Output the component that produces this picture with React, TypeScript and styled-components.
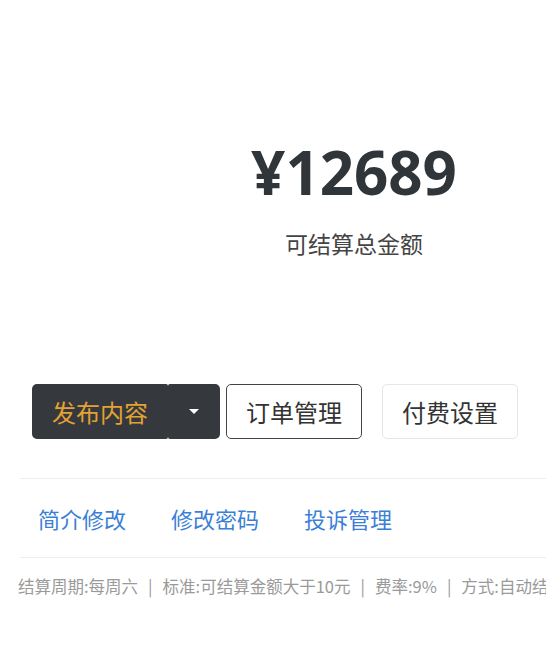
import React from "react";
import styled, { createGlobalStyle } from "styled-components";

const Global = createGlobalStyle`
  html, body {
    margin: 0;
    padding: 0;
    background: #ffffff;
    overflow: hidden;
  }
  body {
    font-family: "Noto Sans CJK SC", "Open Sans", sans-serif;
  }
`;

const Page = styled.div`
  width: 720px;
  display: flex;
  flex-direction: column;
`;

const Summary = styled.section`
  display: flex;
  flex-direction: column;
  align-items: center;
  padding-top: 136px;
  height: 384px;
  box-sizing: border-box;
  width: 708px;
`;

const Amount = styled.div`
  font-family: "Open Sans", "Liberation Sans", sans-serif;
  font-weight: 700;
  font-size: 60px;
  line-height: 72px;
  color: #30353a;
`;

const AmountLabel = styled.div`
  margin-top: 21px;
  font-size: 23px;
  line-height: 28px;
  color: #444;
`;

const Actions = styled.div`
  display: flex;
  align-items: center;
  padding-left: 32px;
  gap: 20px;
  margin-bottom: 39px;
`;

const ButtonGroup = styled.div`
  display: flex;
  gap: 6px;
`;

const SplitButton = styled.div`
  display: flex;
  height: 55px;
`;

const DarkMain = styled.button`
  height: 55px;
  width: 136px;
  box-sizing: border-box;
  border: none;
  border-radius: 5px 2px 2px 5px;
  background: #35393e;
  color: #e3a233;
  font-family: "Noto Sans CJK SC", sans-serif;
  font-size: 24px;
  padding: 0;
  cursor: pointer;
`;

const DarkCaret = styled.button`
  height: 55px;
  width: 52px;
  box-sizing: border-box;
  border: none;
  border-radius: 2px 5px 5px 2px;
  background: #35393e;
  display: flex;
  align-items: center;
  justify-content: center;
  padding: 0;
  cursor: pointer;
`;

const Caret = styled.span`
  width: 0;
  height: 0;
  border-left: 5px solid transparent;
  border-right: 5px solid transparent;
  border-top: 5px solid #ffffff;
`;

const OutlineButton = styled.button<{ $strong?: boolean; $offset?: number }>`
  height: 55px;
  width: 136px;
  box-sizing: border-box;
  background: #ffffff;
  border: 1px solid ${(p) => (p.$strong ? "#444444" : "#e6e6e6")};
  border-radius: 5px;
  color: #333;
  font-family: "Noto Sans CJK SC", sans-serif;
  font-size: 24px;
  padding: 0;
  cursor: pointer;
  flex-shrink: 0;
  margin-left: ${(p) => p.$offset ?? 0}px;
`;

const Divider = styled.hr`
  margin: 0 0 0 20px;
  border: none;
  border-top: 1px solid #eeeeee;
`;

const Tabs = styled.nav`
  display: flex;
  align-items: center;
  height: 78px;
  padding-left: 38px;
  gap: 45px;
`;

const TabLink = styled.a`
  font-size: 22px;
  line-height: 28px;
  color: #3c7fd6;
  text-decoration: none;
  cursor: pointer;
`;

const Footer = styled.div`
  padding-left: 18px;
  height: 56px;
  display: flex;
  align-items: center;
  font-size: 16.5px;
  color: #9a9a9a;
  white-space: nowrap;
`;

const Sep = styled.span`
  margin: 0 10px;
  color: #9a9a9a;
`;

const notes = ["结算周期:每周六", "标准:可结算金额大于10元", "费率:9%", "方式:自动结算"];

export default function App() {
  return (
    <>
      <Global />
      <Page>
        <Summary>
          <Amount>¥12689</Amount>
          <AmountLabel>可结算总金额</AmountLabel>
        </Summary>
        <Actions>
          <ButtonGroup>
            <SplitButton>
              <DarkMain>发布内容</DarkMain>
              <DarkCaret aria-label="更多">
                <Caret />
              </DarkCaret>
            </SplitButton>
            <OutlineButton $strong>订单管理</OutlineButton>
          </ButtonGroup>
          <OutlineButton>付费设置</OutlineButton>
          <OutlineButton $offset={8}>提现</OutlineButton>
        </Actions>
        <Divider />
        <Tabs>
          <TabLink>简介修改</TabLink>
          <TabLink>修改密码</TabLink>
          <TabLink>投诉管理</TabLink>
        </Tabs>
        <Divider />
        <Footer>
          {notes.map((n, i) => (
            <React.Fragment key={n}>
              {i > 0 && <Sep>|</Sep>}
              {n}
            </React.Fragment>
          ))}
        </Footer>
      </Page>
    </>
  );
}
